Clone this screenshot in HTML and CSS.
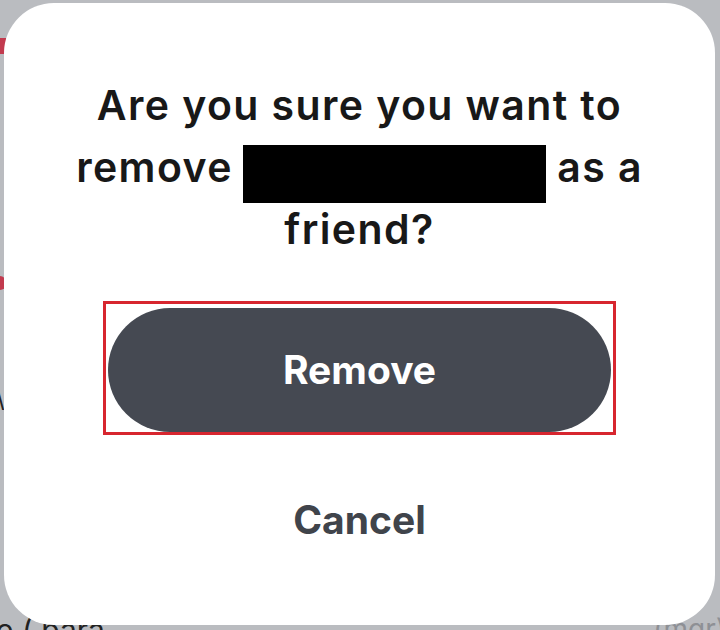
FILE: index.html
```html
<!DOCTYPE html>
<html lang="en">
<head>
<meta charset="utf-8">
<title>Remove friend</title>
<link rel="stylesheet" href="styles.css">
</head>
<body>
<div class="behind">
  <span class="peek peek-red-top"></span>
  <span class="peek peek-red-mid"></span>
  <span class="peek-slash">\</span>
  <span class="peek-bottom-left">e ( para</span>
  <span class="peek-bottom-right">(mgr)</span>
</div>
<div class="dialog">
  <p class="question">Are you sure you want to<br>remove <span class="redacted"></span> as a<br>friend?</p>
  <div class="highlight">
    <button class="btn-remove">Remove</button>
  </div>
  <button class="btn-cancel">Cancel</button>
</div>
</body>
</html>
```

FILE: styles.css
```css
html, body {
  margin: 0;
  padding: 0;
}
body {
  width: 720px;
  height: 630px;
  overflow: hidden;
  background: #babcc0;
  font-family: Inter, Lato, "Noto Sans", sans-serif;
  position: relative;
}
.behind {
  position: absolute;
  inset: 0;
}
.peek {
  position: absolute;
  left: 0;
  width: 6px;
  background: #c23a4e;
}
.peek-red-top { top: 38px; height: 16px; }
.peek-red-mid { top: 276px; height: 14px; border-radius: 0 8px 8px 0; }
.peek-slash {
  position: absolute;
  left: -4px;
  top: 384px;
  font-size: 24px;
  color: #222;
}
.peek-bottom-left {
  position: absolute;
  left: -4px;
  top: 612px;
  font-size: 30px;
  color: #222;
}
.peek-bottom-right {
  position: absolute;
  right: -6px;
  top: 612px;
  font-size: 28px;
  color: #8e9095;
}
.dialog {
  position: relative;
  margin: 3px 5px 0 4px;
  height: 622px;
  background: #ffffff;
  border-radius: 50px;
  box-sizing: border-box;
  padding-top: 71px;
  display: flex;
  flex-direction: column;
  align-items: center;
}
.question {
  margin: 0;
  text-align: center;
  font-size: 41px;
  line-height: 62px;
  font-weight: 600;
  letter-spacing: 1.4px;
  color: #181818;
}
.redacted {
  display: inline-block;
  width: 303px;
  height: 58px;
  background: #000;
  vertical-align: -14px;
  margin: 0 0 -7px -2px;
}
.highlight {
  margin-top: 41px;
  width: 513px;
  box-sizing: border-box;
  border: 3px solid #d7262f;
  padding: 4px 2px 0;
}
.btn-remove {
  display: flex;
  align-items: center;
  justify-content: center;
  width: 100%;
  height: 124px;
  border: 0;
  border-radius: 62px;
  background: #454952;
  color: #ffffff;
  font-family: inherit;
  font-size: 39px;
  line-height: 40px;
  font-weight: 700;
  padding: 0;
}
.btn-cancel {
  margin-top: 60px;
  border: 0;
  background: none;
  padding: 0;
  font-family: inherit;
  font-size: 39px;
  line-height: 50px;
  font-weight: 700;
  color: #40444b;
}
```
